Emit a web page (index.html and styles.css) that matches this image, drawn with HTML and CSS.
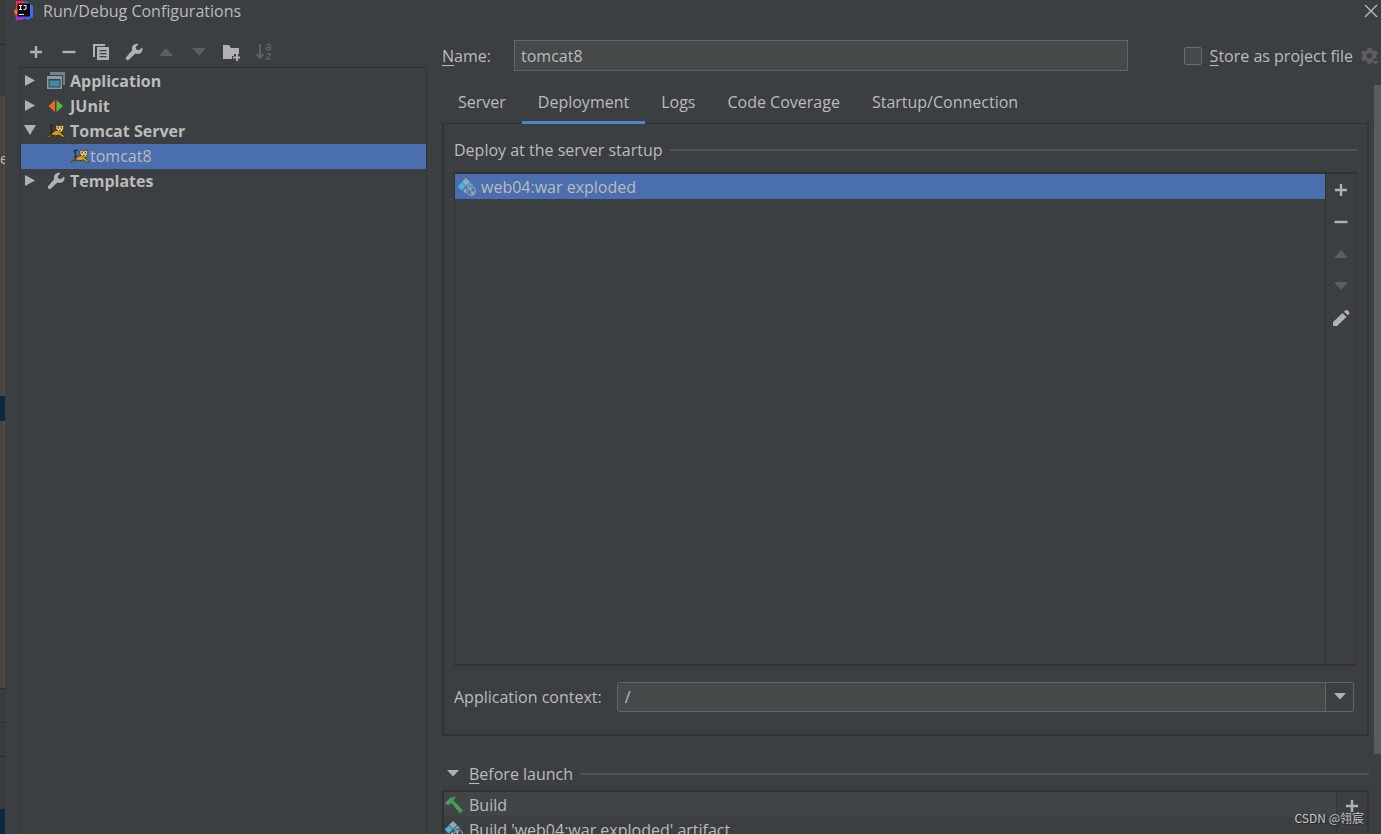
FILE: index.html
```html
<!DOCTYPE html>
<html lang="en">
<head>
<meta charset="utf-8">
<title>Run/Debug Configurations</title>
<link rel="stylesheet" href="styles.css">
</head>
<body>
<svg class="defs" aria-hidden="true">
  <symbol id="plus" viewBox="0 0 18 18"><path d="M9 3v12M3 9h12" stroke="#afb1b3" stroke-width="2.4" fill="none"/></symbol>
  <symbol id="minus" viewBox="0 0 18 18"><path d="M2.500 9h13" stroke="#afb1b3" stroke-width="2.4"/></symbol>
  <symbol id="up" viewBox="0 0 18 18"><path d="M2 13h14L9 5z" fill="#5c5e60"/></symbol>
  <symbol id="down" viewBox="0 0 18 18"><path d="M2 5h14l-7 8z" fill="#5c5e60"/></symbol>
  <symbol id="copy" viewBox="0 0 18 18"><path d="M1 1h12v2H3v11H1z" fill="#afb1b3"/><path fill-rule="evenodd" d="M5 4h12v13H5zM7.500 7v1.200h7V7zm0 3v1.200h7V10zm0 3v1.200h7V13z" fill="#afb1b3"/></symbol>
  <symbol id="wrench" viewBox="0 0 18 18"><path d="M17 4.500l-3.200 2.800-2.400-.7-.7-2.400L13.500 1C11 .2 8.500 1 7.400 3.200c-.7 1.400-.6 2.800-.2 4L.8 14.500c-.8 1 1.600 3.500 2.700 2.600l7-6.500c2.500.8 5 .1 6.300-1.900 1-1.400 1-3 .2-4.200z" fill="#afb1b3"/></symbol>
  <symbol id="folder" viewBox="0 0 18 18"><path d="M1 2h6l2 3h8v6h-5v2h-2v3H1z" fill="#afb1b3"/><path d="M15 10.500v8M11 14.500h8" stroke="#afb1b3" stroke-width="2"/></symbol>
  <symbol id="sort" viewBox="0 0 18 18"><path d="M5 1v13M1.500 11L5 15l3.500-4" stroke="#5c5e60" stroke-width="2" fill="none"/><path d="M11.500 2c2-1 4-.5 4 1v4.500m0-3c-4-.5-5 .5-4.500 1.700.6 1.500 3.500 1 4.500-.7M11.500 11h4l-4 5h4.500" stroke="#5c5e60" stroke-width="1.500" fill="none"/></symbol>
  <symbol id="right-arrow" viewBox="0 0 12 12"><path d="M1 0l10 5.500L1 11z" fill="#afb1b3"/></symbol>
  <symbol id="open-arrow" viewBox="0 0 12 12"><path d="M0 0h12L6 10z" fill="#afb1b3"/></symbol>
  <symbol id="small-arrow" viewBox="0 0 12 12"><path d="M0 2h12L6 8.500z" fill="#afb1b3"/></symbol>
  <symbol id="application" viewBox="0 0 18 18"><path d="M3 0h15v13h-2V3H3z" fill="#74838c"/><path fill-rule="evenodd" d="M0 4h15v13H0zm1.500 3v8.500h12V7z" fill="#8b9aa3"/><path d="M2.500 8.500h10v6h-10z" fill="#3e8aa8"/></symbol>
  <symbol id="junit" viewBox="0 0 18 18"><path d="M8 3v12L1.500 9z" fill="#f26522"/><path d="M9.500 3v12L16 9z" fill="#62b543"/></symbol>
  <symbol id="tomcat" viewBox="0 0 18 18"><path d="M3 11l2-1.500L4.500 6 3 4.500l2-1.500 1.500 1" stroke="#221e18" stroke-width="1.100" fill="none"/><path d="M0 15l1.500-1.500L4 13l2-3 3-1.500 4 .5 1.500 2.500 2.500 2 1 1.500-2.500.3-3-2.300-4 .7L5 13l-2.500 2z" fill="#d69c1c" stroke="#241d10" stroke-width=".7"/><path d="M9 3l2 1h3l2.500-1v4l-2 3h-2.500L9 7z" fill="#f4cf66" stroke="#262017" stroke-width=".5"/><path d="M10.500 5.200h1.200v1.200h-1.200zM13.800 5.200H15v1.200h-1.200zM12 7.800h1.600v.9H12z" fill="#211c15"/></symbol>
  <symbol id="artifact" viewBox="0 0 18 18"><path d="M8 0l4 4-4 4-4-4z" fill="#9aa7b0"/><path d="M3.700 4.500l4 4-4 4-4-4z" fill="#40b6e0"/><path d="M12.500 4.500l3.300 3.200c-2.600-.6-4.700 0-6.200 2L8.500 8.500z" fill="#40b6e0"/><path d="M5 13l3-3v5.700z" fill="#9aa7b0"/><circle cx="13.200" cy="13.200" r="4.200" fill="none" stroke="#9aa7b0" stroke-width="1.200"/><path d="M10 11l3-1.700 1 1.700-1.500 2 3 .5 1 1.500-2 2-2-1.500.5-1.500z" fill="#9aa7b0"/></symbol>
  <symbol id="pencil" viewBox="0 0 18 18"><path d="M1 13L10.500 4l4 4L5 17H1zM12 2.700l1.500-1.400c1.300-1.300 5 2 3.600 3.500l-1.400 1.500z" fill="#afb1b3"/></symbol>
  <symbol id="gear" viewBox="0 0 18 18"><path fill-rule="evenodd" d="M6.500 1h4l.5 2.500 1.500.8L15 3.500l1.800 3.200L15 8.500V10l1.500 1.300H13l-2 3-.5 2.200h-4L6 14l-1.500-.8-2.500.8-1.800-3.200L2 9V8L.2 6.700 2 3.500l2.500.8L6 3.500zM8.500 6a2.800 2.800 0 100 5.600A2.800 2.800 0 008.500 6z" fill="#5c5e60"/><path d="M11 14h7l-3.500 4z" fill="#5c5e60"/></symbol>
  <symbol id="hammer" viewBox="0 0 18 18"><path d="M0 7l5-5 6-1.500L8.500 4.500 18 14.500l-3 3L6.500 7 3 9.500z" fill="#499c54"/></symbol>
  <symbol id="close" viewBox="0 0 14 14"><path d="M1 1l12 12M13 1L1 13" stroke="#b8babb" stroke-width="1.300"/></symbol>
  <symbol id="idea" viewBox="0 0 20 20"><path d="M2 0h8l3 10-12 1 1-5z" fill="#fe2857"/><path d="M0 9l6-1v7l-5-2z" fill="#fc801d"/><path d="M10 2l2-2 7 5v11l-5 3-5-3z" fill="#3b6cf0"/><path d="M1 13l8 2 3 2-4 2H2z" fill="#9a35d0"/><path d="M3.500 2.500h12.500v13H3.500z" fill="#080508"/><path d="M5 4.500h3M6.500 4.500v4M5 8.500h3M9.500 4.500H12v3l-1 1H9.500M5 13.500h5" stroke="#eee" stroke-width="1.100" fill="none"/></symbol>
</svg>
<div class="screen">
  <div class="backdrop" aria-hidden="true"><i class="edge top"></i><i class="edge upper"></i><i class="sand first"><span>e</span></i><i class="mark"></i><i class="sand second"></i><i class="edge"></i><i class="edge"></i><i class="edge last"></i><i class="mark"></i></div>
  <main class="dialog">
    <header class="titlebar">
      <svg class="logo"><use href="#idea"/></svg>
      <h1>Run/Debug Configurations</h1>
      <button class="close" aria-label="Close"><svg><use href="#close"/></svg></button>
    </header>
    <div class="columns">
      <aside class="sidebar">
        <div class="toolbar">
          <button aria-label="Add"><svg><use href="#plus"/></svg></button>
          <button aria-label="Remove"><svg><use href="#minus"/></svg></button>
          <button aria-label="Copy"><svg><use href="#copy"/></svg></button>
          <button aria-label="Edit templates"><svg><use href="#wrench"/></svg></button>
          <button aria-label="Move up" disabled><svg><use href="#up"/></svg></button>
          <button aria-label="Move down" disabled><svg><use href="#down"/></svg></button>
          <button aria-label="New folder"><svg><use href="#folder"/></svg></button>
          <button aria-label="Sort" disabled><svg><use href="#sort"/></svg></button>
        </div>
        <ul class="tree">
          <li><svg class="arrow"><use href="#right-arrow"/></svg><svg><use href="#application"/></svg>Application</li>
          <li><svg class="arrow"><use href="#right-arrow"/></svg><svg><use href="#junit"/></svg>JUnit</li>
          <li><svg class="arrow"><use href="#open-arrow"/></svg><svg><use href="#tomcat"/></svg>Tomcat Server</li>
          <li class="child selected"><svg><use href="#tomcat"/></svg>tomcat8</li>
          <li><svg class="arrow"><use href="#right-arrow"/></svg><svg><use href="#wrench"/></svg>Templates</li>
        </ul>
      </aside>
      <section class="editor">
        <div class="name-row">
          <label class="name-label" for="name"><u>N</u>ame:</label>
          <input class="name-field" id="name" type="text" value="tomcat8">
          <input class="store-box" id="store" type="checkbox">
          <label class="store-label" for="store"><u>S</u>tore as project file</label>
          <button class="gear" aria-label="Storage options"><svg><use href="#gear"/></svg></button>
        </div>
        <div class="scroll-area">
          <div class="form">
            <nav class="tabs">
              <button>Server</button><button class="active">Deployment</button><button>Logs</button><button>Code Coverage</button><button>Startup/Connection</button>
            </nav>
            <div class="panel">
              <h2 class="heading">Deploy at the server startup</h2>
              <div class="list deploy">
                <ul><li class="selected"><svg><use href="#artifact"/></svg>web04:war exploded</li></ul>
                <div class="side">
                  <button aria-label="Add artifact"><svg><use href="#plus"/></svg></button>
                  <button aria-label="Remove artifact"><svg><use href="#minus"/></svg></button>
                  <button aria-label="Artifact up" disabled><svg><use href="#up"/></svg></button>
                  <button aria-label="Artifact down" disabled><svg><use href="#down"/></svg></button>
                  <button aria-label="Edit artifact"><svg><use href="#pencil"/></svg></button>
                </div>
              </div>
              <div class="context">
                <label for="context">Application context:</label>
                <div class="combo"><input id="context" type="text" value="/"><button aria-label="Show contexts"><svg><use href="#small-arrow"/></svg></button></div>
              </div>
            </div>
            <h2 class="heading launch"><svg><use href="#small-arrow"/></svg><span><u>B</u>efore launch</span></h2>
            <div class="list tasks">
              <ul>
                <li class="shaded"><svg><use href="#hammer"/></svg>Build</li>
                <li><svg><use href="#artifact"/></svg>Build 'web04:war exploded' artifact</li>
              </ul>
              <div class="side"><button aria-label="Add task"><svg><use href="#plus"/></svg></button></div>
            </div>
          </div>
          <div class="scrollbar" aria-hidden="true"></div>
        </div>
      </section>
    </div>
  </main>
  <div class="watermark">CSDN @翎宸</div>
</div>
</body>
</html>
```
FILE: styles.css
```css
* { box-sizing: border-box; }
body {
  margin: 0;
  background: #3c3f41;
  color: #bbbbbb;
  font: 16px/24px "Open Sans", "Noto Sans CJK SC", sans-serif;
}
button, input { font: inherit; color: inherit; }
button { padding: 0; border: 0; background: none; display: flex; align-items: center; justify-content: center; }
ul { list-style: none; margin: 0; padding: 0; }
h1, h2 { margin: 0; font-size: 16px; font-weight: 400; }
svg { width: 18px; height: 18px; flex: none; overflow: visible; }
u { text-underline-offset: 3px; text-decoration-thickness: 1px; }
.defs { position: absolute; width: 0; height: 0; }
.screen { display: flex; height: 100vh; overflow: hidden; position: relative; }

.backdrop { flex: 0 0 5px; display: flex; flex-direction: column; background: #393b3d; overflow: hidden; }
.edge { flex: 0 0 34px; border-top: 1px solid #2b2b2b; }
.edge.top { flex-basis: 45px; border-top: 0; border-bottom: 1px solid #2b2b2b; }
.edge.upper { flex-basis: 51px; border-top: 0; }
.edge.last { flex-basis: 53px; }
.sand { flex: 0 0 300px; background: #49453b; border-right: 1px solid #544d3d; font-style: normal; font-size: 14px; line-height: 126px; }
.sand.second { flex: 1 1 0; }
.mark { flex: 0 0 25px; background: #0d293e; }

.dialog { flex: 1; min-width: 0; display: flex; flex-direction: column; }
.titlebar { flex: none; height: 21px; display: flex; align-items: center; gap: 9px; padding: 0 3px 0 9px; }
.titlebar .logo { width: 20px; height: 20px; }
.titlebar h1 { flex: 1; line-height: 22px; }
.close svg { width: 14px; height: 14px; }
.columns { flex: 1; min-height: 0; display: flex; gap: 15px; padding-left: 15px; }

.sidebar { flex: 0 0 407px; display: flex; flex-direction: column; }
.toolbar { width: 248px; height: 46px; margin-left: 6px; padding-top: 16px; display: flex; justify-content: space-between; }
.toolbar button { width: 20px; height: 30px; }
.tree { flex: 1; border: 1px solid #323232; border-bottom: 0; font-weight: 700; padding-top: 1px; }
.tree li { display: flex; align-items: center; height: 25px; padding: 0 0 1px 3px; }
.tree svg { margin-right: 5px; }
.tree .arrow { width: 12px; height: 12px; margin-right: 11px; }
.tree .child { padding-left: 50px; font-weight: 400; }
.tree .child svg { margin-right: 1px; }
.selected { background: #4b6eaf; }

.editor { flex: 1; min-width: 0; display: flex; flex-direction: column; }
.name-row { display: flex; align-items: center; padding: 19px 2px 14px 0; flex: none; }
.name-label { flex: 0 0 72px; }
.name-field { flex: 1; min-width: 0; height: 31px; padding: 0 6px; border: 1px solid #646464; background: #45494a; outline: 0; }
.store-box { appearance: none; width: 18px; height: 18px; margin: 0 8px 0 56px; border: 1px solid #6b6b6b; border-radius: 2px; background: #43494a; }
.gear { margin-left: 8px; }
.scroll-area { flex: 1; min-height: 0; display: flex; gap: 5px; }
.form { flex: 1; min-width: 0; }
.scrollbar { flex: 0 0 7px; align-self: stretch; margin-bottom: 80px; background: #595b5d; }
.tabs { display: flex; height: 39px; margin-bottom: -1px; position: relative; }
.tabs button { padding: 0 16px 2px; border-bottom: 3px solid transparent; }
.tabs .active { border-color: #4a88c7; }
.panel { border: 2px solid #323232; border-top-width: 1px; padding: 14px 10px 22px; }
.heading { display: flex; align-items: center; gap: 7px; }
.heading::after { content: ""; flex: 1; height: 2px; background: #515354; }
.list { display: flex; border: 1px solid #323232; }
.list ul { flex: 1; min-width: 0; }
.list li { display: flex; align-items: center; gap: 5px; height: 25px; padding-left: 3px; white-space: nowrap; }
.deploy { height: 494px; margin-top: 10px; border-width: 2px 1px; }
.side { flex: 0 0 31px; border-left: 1px solid #323232; }
.side button { width: 30px; height: 32px; }
.context { display: flex; align-items: center; padding: 16px 3px 0 0; gap: 15px; }
.combo { flex: 1; display: flex; height: 30px; border: 1px solid #646464; border-radius: 3px; overflow: hidden; }
.combo input { flex: 1; min-width: 0; border: 0; padding: 0 7px; background: #45494a; outline: 0; }
.combo button { flex: 0 0 28px; border-left: 1px solid #646464; }
.combo svg, .launch svg { width: 12px; height: 12px; }
.launch { margin-top: 26px; padding-left: 5px; }
.launch svg { margin-right: 3px; }
.tasks { margin-top: 4px; border: 2px solid #323232; height: 80px; }
.tasks li { padding-left: 1px; gap: 6px; }
.tasks .side button { height: 28px; }
.shaded { background: #414547; }

.watermark { position: absolute; right: 17px; bottom: 7px; font: 12px/18px "Open Sans", "Noto Sans CJK SC", sans-serif; font-family: "Noto Sans CJK SC", sans-serif; font-size: 12px; color: #c8c8c8; text-shadow: 1px 1px 1px #222222; }
```
